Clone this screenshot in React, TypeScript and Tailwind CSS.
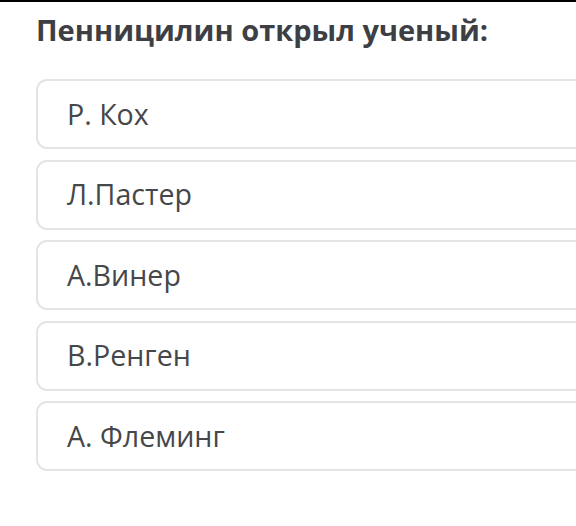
export default function App() {
  const options = ['Р. Кох', 'Л.Пастер', 'А.Винер', 'В.Ренген', 'А. Флеминг'];

  return (
    <main className="w-[576px] h-[526px] bg-white overflow-hidden border-t-2 border-black font-['Open_Sans',sans-serif]">
      <div className="pl-[36px] pt-[9px]">
        {/* Question */}
        <h1 className="text-[29px] font-bold text-[#3d3f44] leading-[38px]">
          Пенницилин открыл ученый:
        </h1>

        {/* Answers */}
        <div className="mt-[30px] flex flex-col gap-[10.5px] w-[560px]">
          {options.map((o) => (
            <div
              key={o}
              className="h-[70px] flex items-center pl-[29px] border-2 border-[#e3e4e4] rounded-[11px] bg-white text-[28.6px] text-[#45474b]"
            >
              {o}
            </div>
          ))}
        </div>
      </div>
    </main>
  );
}
